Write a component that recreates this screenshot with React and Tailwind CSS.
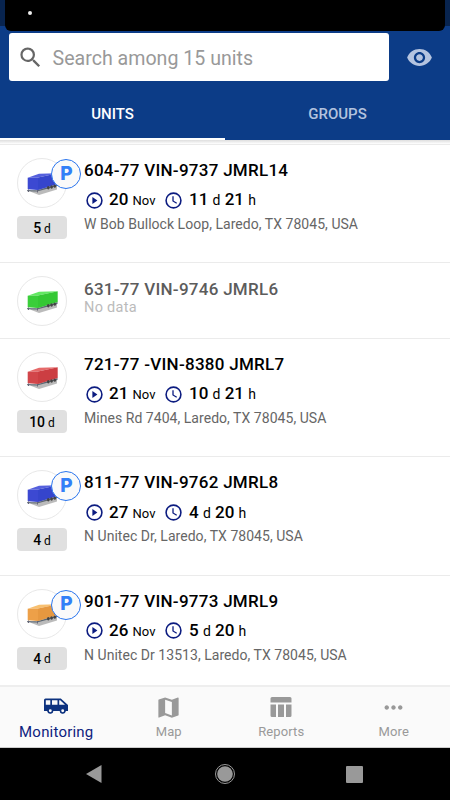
import clsx from 'clsx'
import { MdSearch, MdVisibility, MdMap, MdMoreHoriz } from 'react-icons/md'

const units = [
  { name: '604-77 VIN-9737 JMRL14', color: 'blue', parked: true, badge: '5', day: '20', d: '11', h: '21', address: 'W Bob Bullock Loop, Laredo, TX 78045, USA' },
  { name: '631-77 VIN-9746 JMRL6', color: 'green' },
  { name: '721-77 -VIN-8380 JMRL7', color: 'red', badge: '10', day: '21', d: '10', h: '21', address: 'Mines Rd 7404, Laredo, TX 78045, USA' },
  { name: '811-77 VIN-9762 JMRL8', color: 'blue', parked: true, badge: '4', day: '27', d: '4', h: '20', address: 'N Unitec Dr, Laredo, TX 78045, USA' },
  { name: '901-77 VIN-9773 JMRL9', color: 'orange', parked: true, badge: '4', day: '26', d: '5', h: '20', address: 'N Unitec Dr 13513, Laredo, TX 78045, USA' },
]

const trailerColors = {
  blue: { top: '#5560dd', side: '#3545cc', end: '#3c49d2' },
  green: { top: '#62e862', side: '#34c834', end: '#3ace3a' },
  red: { top: '#e66a6a', side: '#cc3e42', end: '#d2464a' },
  orange: { top: '#f8c070', side: '#e69840', end: '#eda048' },
}

function Trailer({ color }) {
  const c = trailerColors[color]
  return (
    <svg width="32" height="24" viewBox="0 0 32 24">
      <path d="M4 20.500 13 24 31 18.500 31 14.500 20 15Z" fill="#777" opacity=".5" />
      <path d="M1.200 19 11 19.500 31.500 13V15L11 20.500 1.200 20.200Z" fill="#5a6672" />
      <path d="M1.700 6.800 13 2.800 31.700 2.200 12 6.500Z" fill={c.top} />
      <path d="M1.700 6.800 12 6.500V19L1.700 18.300Z" fill={c.end} />
      <path d="M12 6.500 31.700 2.200V13L12 19Z" fill={c.side} />
      <path d="M2.500 18.500v2.500M11.500 19v2.500" stroke="#667" strokeWidth="1" />
      <ellipse cx="22.300" cy="16.800" rx="1.300" ry="1.700" fill="#444" />
      <ellipse cx="25.600" cy="16" rx="1.300" ry="1.700" fill="#444" />
      <ellipse cx="28.800" cy="15.200" rx="1.200" ry="1.600" fill="#444" />
    </svg>
  )
}

function PlayIcon() {
  return (
    <svg className="mr-[6.500px] shrink-0" width="17" height="17" viewBox="0 0 17 17">
      <circle cx="8.500" cy="8.500" r="7.400" fill="none" stroke="#0c1c80" strokeWidth="1.600" />
      <path d="M6.400 5v7l5-3.500Z" fill="#0c1c80" />
    </svg>
  )
}

function ClockIcon() {
  return (
    <svg className="mr-1.5 shrink-0" width="17" height="17" viewBox="0 0 17 17" fill="none" stroke="#0c1c80">
      <circle cx="8.500" cy="8.500" r="7.400" strokeWidth="1.600" />
      <path d="M8 4.300v4.700l3.700 2.200" strokeWidth="1.300" />
    </svg>
  )
}

function VanIcon() {
  return (
    <svg width="26" height="18" viewBox="0 0 26 18">
      <path fillRule="evenodd" fill="#0d327f" d="M2.500 0.500H17.800L25 7V13H22.600A3 3 0 0 1 16.800 13H10.200A3 3 0 0 1 4.400 13H1V2A1.500 1.500 0 0 1 2.500 0.500ZM2.800 2.300V6.800H7.300V2.300ZM9 2.300V6.800H14.500V2.300ZM16.200 2.300V6.800H22L17.200 2.300Z" />
      <circle cx="7.300" cy="12.800" r="2.200" fill="#fafafa" stroke="#0d327f" strokeWidth="1.500" />
      <circle cx="19.700" cy="12.800" r="2.200" fill="#fafafa" stroke="#0d327f" strokeWidth="1.500" />
    </svg>
  )
}

function ReportsIcon() {
  return (
    <svg width="22" height="20" viewBox="0 0 22 20" fill="#999">
      <path d="M2 0H20A1.500 1.500 0 0 1 21.500 1.500V5.500H.5V1.500A1.500 1.500 0 0 1 2 0Z" />
      <path d="M.5 7.500H6V20H2A1.500 1.500 0 0 1 .5 18.500ZM8 7.500H14V20H8ZM16 7.500H21.500V18.500A1.500 1.500 0 0 1 20 20H16Z" />
    </svg>
  )
}

function UnitRow({ unit }) {
  const noData = !unit.badge
  return (
    <div className={clsx('flex shrink-0 border-t border-[#ebebeb] pl-[17px]', noData ? 'h-[76px]' : 'h-[118.200px]')}>
      <div className="relative w-[67px] shrink-0 pt-[13px]">
        <div className="flex size-[50px] items-center justify-center rounded-full border border-[#e8e8e8]">
          <Trailer color={unit.color} />
        </div>
        {unit.parked && (
          <div className="absolute top-3.5 left-[34px] flex size-[30px] items-center justify-center rounded-full border-[1.500px] border-[#2a75ee] bg-[#fafafa] pl-px font-['Inter',sans-serif] text-[19px] font-extrabold text-[#3380f7]">
            P
          </div>
        )}
        {unit.badge && (
          <div className="mt-2 flex h-[23px] w-[50px] items-center justify-center rounded bg-[#e0e0e0] pt-0.5 text-[14px] font-medium">
            {unit.badge}<span className="ml-[3px] text-[12px] font-normal">d</span>
          </div>
        )}
      </div>

      <div className={clsx('whitespace-nowrap', noData ? 'pt-[15px] text-[#5c5c5c]' : 'pt-3.5 text-black')}>
        <div className="text-[17px] leading-[22px] font-medium tracking-[0.270px]">{unit.name}</div>
        {noData ? (
          <div className="text-[14.500px] leading-[15px] tracking-[0.300px] text-[#bbb]">No data</div>
        ) : (
          <>
            <div className="mt-2 flex h-[22px] items-center pl-[1.500px] text-[17px] font-medium">
              <PlayIcon />
              <div className="w-[56px]">{unit.day} <span className="text-[13px] font-normal">Nov</span></div>
              <ClockIcon />
              <div className="pl-px">
                {unit.d} <span className="text-[14px] font-normal">d</span> {unit.h} <span className="text-[14px] font-normal">h</span>
              </div>
            </div>
            <div className="mt-1 text-[14px] leading-[18px] tracking-[0.040px] text-[#666]">{unit.address}</div>
          </>
        )}
      </div>
    </div>
  )
}

function NavItem({ icon, label, active }) {
  return (
    <div className="flex flex-1 flex-col items-center">
      <div className="flex h-[34px] items-center pt-1.5">{icon}</div>
      <span className={clsx('mt-px leading-5', active ? 'text-[15px] tracking-[0.200px] text-[#0d227f]' : 'text-[13px] tracking-[0.100px] text-[#999]')}>{label}</span>
    </div>
  )
}

export default function App() {
  return (
    <div className="flex h-[800px] w-[450px] flex-col overflow-hidden bg-white font-['Roboto',sans-serif]">
      <header className="flex h-[140px] shrink-0 flex-col bg-[#0c3c87]">
        <div className="h-[26px] shrink-0 bg-[#08244f] px-[5px]">
          <div className="h-[31px] rounded-b-md bg-black pt-[11px] pl-[23px]">
            <div className="size-1 rounded-full bg-[#eee]" />
          </div>
        </div>
        <div className="mt-[7px] flex h-12 items-center pl-[8.500px]">
          <div className="flex h-full w-[380.500px] items-center rounded-[3px] bg-white pl-2">
            <MdSearch size={27} color="#666" />
            <span className="mt-[3px] ml-[9px] text-[19.600px] text-[#999]">Search among 15 units</span>
          </div>
          <MdVisibility className="ml-[17px]" size={27} color="#b5c4e0" />
        </div>
        <div className="flex flex-1 text-[15px] font-medium">
          <div className="flex flex-1 items-center justify-center border-b-2 border-white pt-[9px] text-white">UNITS</div>
          <div className="flex flex-1 items-center justify-center pt-[7px] text-[#b3c3de]">GROUPS</div>
        </div>
      </header>

      <main className="flex min-h-0 flex-1 flex-col overflow-hidden">
        <div className="h-1 shrink-0 bg-linear-to-b from-[#dedede] to-white" />
        {units.map((unit) => <UnitRow key={unit.name} unit={unit} />)}
      </main>

      <nav className="flex h-[63px] shrink-0 border-t-2 border-b border-t-[#eee] border-b-[#ccc] bg-[#fafafa]">
        <NavItem active label="Monitoring" icon={<VanIcon />} />
        <NavItem label="Map" icon={<MdMap size={27} color="#999" />} />
        <NavItem label="Reports" icon={<ReportsIcon />} />
        <NavItem label="More" icon={<MdMoreHoriz size={27} color="#999" />} />
      </nav>

      <div className="flex h-[52px] shrink-0 items-center justify-between bg-black pr-[87px] pl-[85px]">
        <svg width="18" height="20" viewBox="0 0 18 20"><path d="M1 10 16.500 1V19Z" fill="#999" /></svg>
        <svg width="22" height="22" viewBox="0 0 22 22">
          <circle cx="11" cy="11" r="9.500" fill="none" stroke="#999" />
          <circle cx="11" cy="11" r="7.800" fill="#999" />
        </svg>
        <div className="size-[17px] rounded-[1px] bg-[#999]" />
      </div>
    </div>
  )
}
